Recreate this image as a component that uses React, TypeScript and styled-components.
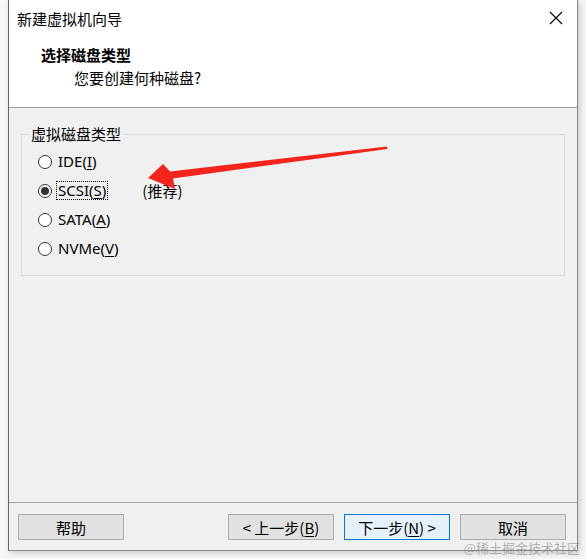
import React from "react";
import styled, { createGlobalStyle } from "styled-components";

const Global = createGlobalStyle`
  html, body { margin: 0; padding: 0; background: #f6f6f6; }
  body { font-family: "Noto Sans CJK SC", "Noto Sans", sans-serif; color: #000; }
  * { box-sizing: border-box; }
`;

const Page = styled.div`
  position: relative;
  width: 586px;
  height: 559px;
  padding-left: 8px;
  overflow: hidden;
`;

const Window = styled.div`
  width: 570px;
  height: 551px;
  background: #f0f0f0;
  border-left: 1px solid #666;
  border-right: 1px solid #8a8a8a;
  border-bottom: 1px solid #8a8a8a;
  box-shadow: 2px 2px 6px rgba(0, 0, 0, 0.18);
  display: flex;
  flex-direction: column;
`;

const TitleBar = styled.div`
  height: 36px;
  background: #fff;
  display: flex;
  align-items: center;
  justify-content: space-between;
  padding: 0 14px 0 8px;
  font-size: 15px;
`;

const Header = styled.div`
  height: 72px;
  background: #fff;
  padding: 8px 0 0 32px;
  display: flex;
  flex-direction: column;
  gap: 1px;
  border-bottom: 1px solid #a0a0a0;
`;

const HeaderTitle = styled.div`
  font-size: 15px;
  font-weight: 700;
  line-height: 22px;
`;

const HeaderSub = styled.div`
  font-size: 15px;
  line-height: 22px;
  padding-left: 33px;
`;

const Body = styled.div`
  flex: 1;
  padding: 17px 12px 0 12px;
`;

const Group = styled.fieldset`
  margin: 0;
  padding: 4px 0 0 15px;
  height: 151px;
  border: 1px solid #d9d9d9;
  display: flex;
  flex-direction: column;
`;

const Legend = styled.legend`
  font-size: 15px;
  padding: 0 2px;
  margin-left: -8px;
  line-height: 18px;
`;

const Row = styled.div`
  height: 29px;
  display: flex;
  align-items: center;
  font-size: 15px;
  font-family: "Noto Sans", "Noto Sans CJK SC", sans-serif;
`;

const Radio = styled.span<{ $checked?: boolean }>`
  width: 14px;
  height: 14px;
  border-radius: 50%;
  border: 1px solid #333;
  background: #fff;
  display: flex;
  align-items: center;
  justify-content: center;
  margin-left: 1px;
  margin-right: 5px;
  &::after {
    content: "";
    width: 8px;
    height: 8px;
    border-radius: 50%;
    background: ${(p) => (p.$checked ? "#333" : "transparent")};
  }
`;

const Label = styled.span<{ $focus?: boolean }>`
  padding: 0 1px;
  line-height: 17px;
  outline: ${(p) => (p.$focus ? "1px dotted #000" : "none")};
`;

const Hint = styled.span`
  margin-left: 35px;
  font-family: "Noto Sans CJK SC", sans-serif;
`;

const Footer = styled.div`
  border-top: 1px solid #a0a0a0;
  padding: 11px 11px 10px 9px;
  display: flex;
  gap: 10px;
`;

const Spacer = styled.div`
  flex: 1;
`;

const Button = styled.button<{ $primary?: boolean }>`
  width: 106px;
  height: 26px;
  margin: 0;
  padding: 0;
  font-family: "Noto Sans CJK SC", "Noto Sans", sans-serif;
  font-size: 15px;
  color: #000;
  background: ${(p) => (p.$primary ? "#e5f1fb" : "#e1e1e1")};
  border: 1px solid ${(p) => (p.$primary ? "#0078d7" : "#adadad")};
  display: flex;
  align-items: center;
  justify-content: center;
  line-height: 1;
`;

const Watermark = styled.div`
  position: absolute;
  right: 6px;
  bottom: 2px;
  font-size: 13px;
  color: rgba(120, 120, 120, 0.55);
  font-family: "Noto Sans CJK SC", sans-serif;
`;

const ArrowSvg = styled.svg`
  position: absolute;
  left: 0;
  top: 0;
  pointer-events: none;
`;

const U = styled.span`
  text-decoration: underline;
  text-underline-offset: 2px;
`;

const CloseIcon = () => (
  <svg width="14" height="14" viewBox="0 0 14 14">
    <path d="M1 1 L13 13 M13 1 L1 13" stroke="#000" strokeWidth="1.1" fill="none" />
  </svg>
);

const options = [
  { label: "IDE", key: "I" },
  { label: "SCSI", key: "S", checked: true, hint: "(推荐)" },
  { label: "SATA", key: "A" },
  { label: "NVMe", key: "V" },
];

export default function App() {
  return (
    <Page>
      <Global />
      <Window>
        <TitleBar>
          <span>新建虚拟机向导</span>
          <CloseIcon />
        </TitleBar>
        <Header>
          <HeaderTitle>选择磁盘类型</HeaderTitle>
          <HeaderSub>您要创建何种磁盘?</HeaderSub>
        </Header>
        <Body>
          <Group>
            <Legend>虚拟磁盘类型</Legend>
            {options.map((o) => (
              <Row key={o.label}>
                <Radio $checked={o.checked} />
                <Label $focus={o.checked}>
                  {o.label}(<U>{o.key}</U>)
                </Label>
                {o.hint && <Hint>{o.hint}</Hint>}
              </Row>
            ))}
          </Group>
        </Body>
        <Footer>
          <Button>帮助</Button>
          <Spacer />
          <Button>&lt; 上一步(<U>B</U>)</Button>
          <Button $primary>下一步(<U>N</U>) &gt;</Button>
          <Button>取消</Button>
        </Footer>
      </Window>
      <ArrowSvg width="586" height="559" viewBox="0 0 586 559">
        <polygon
          points="387,146.5 387.5,149 173,178.5 175,189 148,178 163,164 170,171.5"
          fill="#f3251c"
        />
      </ArrowSvg>
      <Watermark>@稀土掘金技术社区</Watermark>
    </Page>
  );
}
